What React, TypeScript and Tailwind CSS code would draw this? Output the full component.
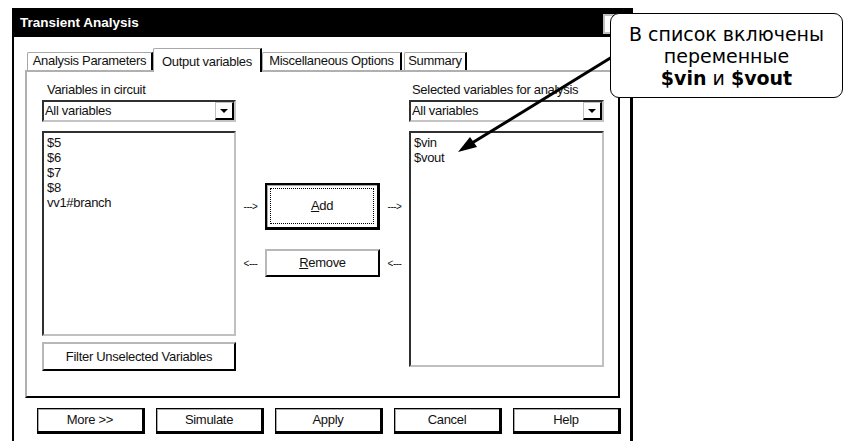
import React from 'react';

const tabs = [
  { label: 'Analysis Parameters', width: 'w-[126px]', active: false },
  { label: 'Output variables', width: 'w-[109px]', active: true },
  { label: 'Miscellaneous Options', width: 'w-[140px]', active: false },
  { label: 'Summary', width: 'w-[63px] ml-[2px]', active: false },
];

const circuitVars = ['$5', '$6', '$7', '$8', 'vv1#branch'];
const selectedVars = ['$vin', '$vout'];
const footerButtons = ['More >>', 'Simulate', 'Apply', 'Cancel', 'Help'];

function DropDown() {
  return (
    <div className="flex h-[22px] border-2 border-t-[#303030] border-l-[#303030] border-r-[#c4c4c4] border-b-[#c4c4c4] bg-white">
      <div className="flex-1 pl-[1px] leading-[18px]">All variables</div>
      <div className="flex w-[19px] items-center justify-center border-t border-l border-[#c0c0c0] border-r-2 border-b-2 border-r-black border-b-black">
        <svg width="8" height="4" viewBox="0 0 8 4">
          <path d="M0 0h8L4 4z" fill="#000" />
        </svg>
      </div>
    </div>
  );
}

function ListBox({ items, height }: { items: string[]; height: string }) {
  return (
    <div
      className={`${height} mt-[9px] border-2 border-t-[#303030] border-l-[#303030] border-r-[#c0c0c0] border-b-[#c0c0c0] bg-white pl-[3px] pt-[2px] leading-[15px]`}
    >
      {items.map(item => (
        <div key={item}>{item}</div>
      ))}
    </div>
  );
}

function Arrow({ text }: { text: string }) {
  return <div className="w-[29px] text-center text-[10px] tracking-[-0.5px]">{text}</div>;
}

export default function App() {
  return (
    <div className="relative h-[441px] w-[845px] overflow-hidden bg-white pl-[12px] pt-[8px] font-['Liberation_Sans',Arial,sans-serif] text-[13px] tracking-[-0.3px] text-[#111]">
      <div className="h-[460px] w-[621px] border-t-2 border-l-2 border-r-[3px] border-black">
        {/* title bar */}
        <div className="flex h-[27px] items-center justify-between bg-black">
          <span className="pl-[6px] text-[13.5px] font-bold tracking-normal text-white">Transient Analysis</span>
          <div className="mr-[7px] h-[20px] w-[20px] border-2 border-[#c0c0c0] bg-white" />
        </div>

        {/* tabs */}
        <div className="ml-[13px] mt-[11px] flex h-[22px] items-end">
          {tabs.map(tab =>
            tab.active ? (
              <div
                key={tab.label}
                className={`${tab.width} relative z-10 -mb-[2px] h-[24px] rounded-tl-[2px] border-t border-l border-[#a8a8a8] border-r-2 border-r-black bg-white pt-[3px] text-center`}
              >
                {tab.label}
              </div>
            ) : (
              <div
                key={tab.label}
                className={`${tab.width} h-[18px] rounded-tl-[2px] border-t border-l border-[#a8a8a8] border-r-2 border-r-black text-center leading-[16px]`}
              >
                {tab.label}
              </div>
            )
          )}
        </div>

        {/* tab panel */}
        <div className="ml-[11px] flex h-[328px] w-[595px] border-t-2 border-l-2 border-[#b0b0b0] border-r-2 border-b-2 border-r-black border-b-black pl-[15px] pt-[11px]">
          <div className="w-[194px]">
            <div className="pl-[5px] leading-[14px]">Variables in circuit</div>
            <div className="mt-[3px]">
              <DropDown />
            </div>
            <ListBox items={circuitVars} height="h-[205px]" />
            <button className="mt-[6px] h-[29px] w-[194px] border-2 border-t-[#b8b8b8] border-l-[#b8b8b8] border-r-black border-b-black bg-white">
              Filter Unselected Variables
            </button>
          </div>

          <div className="w-[173px] pt-[100px]">
            <div className="flex items-center">
              <Arrow text="--->" />
              <button className="h-[47px] w-[115px] border-2 border-black border-r-[3px] border-b-[3px] bg-white p-[3px] shadow-[inset_1px_1px_0_#a8a8a8]">
                <div className="flex h-full w-full items-center justify-center border border-dotted border-black">
                  <span>
                    <u>A</u>dd
                  </span>
                </div>
              </button>
              <Arrow text="--->" />
            </div>
            <div className="mt-[19px] flex items-center">
              <Arrow text="<---" />
              <button className="h-[28px] w-[115px] border-2 border-t-[#b8b8b8] border-l-[#b8b8b8] border-r-black border-b-black bg-white">
                <u>R</u>emove
              </button>
              <Arrow text="<---" />
            </div>
          </div>

          <div className="w-[195px]">
            <div className="pl-[3px] leading-[14px]">Selected variables for analysis</div>
            <div className="mt-[3px]">
              <DropDown />
            </div>
            <ListBox items={selectedVars} height="h-[236px]" />
          </div>
        </div>

        {/* footer buttons */}
        <div className="ml-[23px] mt-[10px] flex gap-[11px]">
          {footerButtons.map(label => (
            <button
              key={label}
              className="h-[26px] w-[108px] border border-black border-r-[3px] border-b-[3px] bg-white shadow-[inset_1px_1px_0_#a8a8a8]"
            >
              {label}
            </button>
          ))}
        </div>
      </div>

      {/* annotation arrow */}
      <svg className="pointer-events-none absolute inset-0" width="845" height="441">
        <line x1="612" y1="57" x2="472" y2="143" stroke="#000" strokeWidth="3" />
        <polygon points="458,152 477,147 470,137" fill="#000" />
      </svg>

      {/* callout */}
      <div className="absolute left-[610px] top-[13px] flex h-[85px] w-[233px] flex-col items-center justify-center rounded-[9px] border-[1.5px] border-black bg-white font-['DejaVu_Sans',sans-serif] text-[19px] leading-[22px] tracking-normal text-black">
        <div>В список включены</div>
        <div>переменные</div>
        <div>
          <span className="font-black">$vin</span> и <span className="font-black">$vout</span>
        </div>
      </div>
    </div>
  );
}
